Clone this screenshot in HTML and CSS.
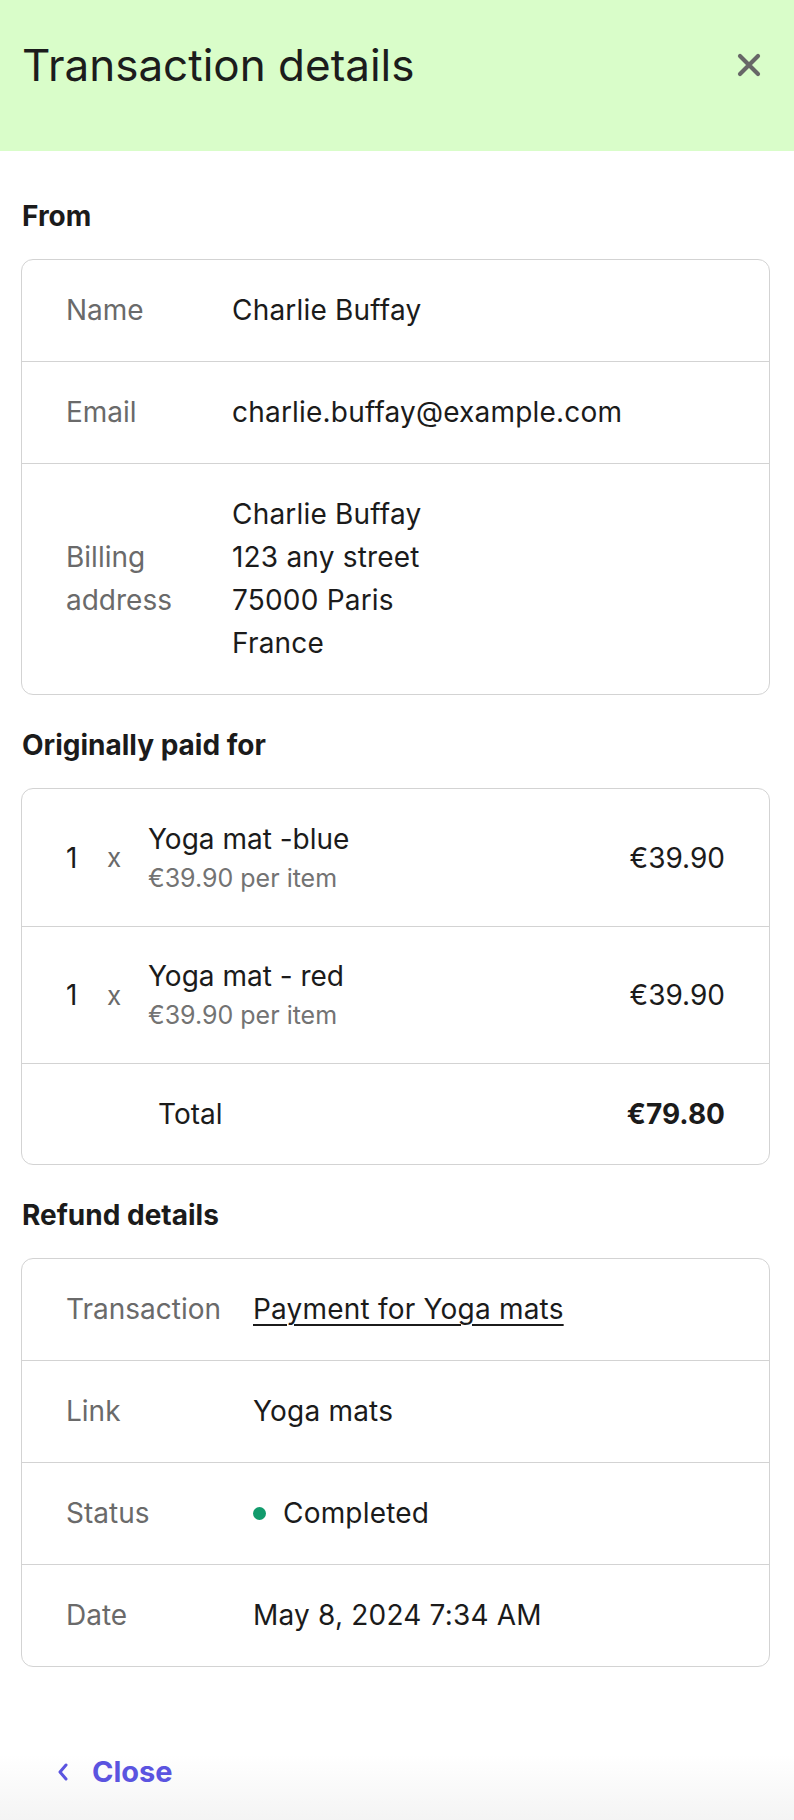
FILE: index.html
```html
<!DOCTYPE html>
<html lang="en">
<head>
<meta charset="utf-8">
<title>Transaction details</title>
<link rel="stylesheet" href="styles.css">
</head>
<body>
<div class="panel">
  <header class="topbar">
    <h1 class="title">Transaction details</h1>
    <button class="x-btn" aria-label="Close">
      <svg width="26" height="26" viewBox="0 0 26 26"><path d="M4 4 L22 22 M22 4 L4 22" stroke="#676767" stroke-width="4.2" stroke-linecap="round" fill="none"/></svg>
    </button>
  </header>

  <main class="content">
    <h2 class="section-title first">From</h2>
    <div class="card">
      <div class="row kv">
        <div class="label">Name</div>
        <div class="value">Charlie Buffay</div>
      </div>
      <div class="row kv">
        <div class="label">Email</div>
        <div class="value">charlie.buffay@example.com</div>
      </div>
      <div class="row kv tall">
        <div class="label">Billing<br>address</div>
        <div class="value">Charlie Buffay<br>123 any street<br>75000 Paris<br>France</div>
      </div>
    </div>

    <h2 class="section-title">Originally paid for</h2>
    <div class="card">
      <div class="row item">
        <div class="qty">1</div>
        <div class="times">x</div>
        <div class="desc">
          <div class="name">Yoga mat -blue</div>
          <div class="unit">€39.90 per item</div>
        </div>
        <div class="price">€39.90</div>
      </div>
      <div class="row item">
        <div class="qty">1</div>
        <div class="times">x</div>
        <div class="desc">
          <div class="name">Yoga mat - red</div>
          <div class="unit">€39.90 per item</div>
        </div>
        <div class="price">€39.90</div>
      </div>
      <div class="row total">
        <div class="total-label">Total</div>
        <div class="total-value">€79.80</div>
      </div>
    </div>

    <h2 class="section-title">Refund details</h2>
    <div class="card">
      <div class="row kv wide">
        <div class="label">Transaction</div>
        <div class="value"><a class="link" href="#">Payment for Yoga mats</a></div>
      </div>
      <div class="row kv wide">
        <div class="label">Link</div>
        <div class="value">Yoga mats</div>
      </div>
      <div class="row kv wide">
        <div class="label">Status</div>
        <div class="value status"><span class="dot"></span>Completed</div>
      </div>
      <div class="row kv wide">
        <div class="label">Date</div>
        <div class="value">May 8, 2024 7:34 AM</div>
      </div>
    </div>
  </main>

  <footer class="footer">
    <a class="close-link" href="#">
      <svg width="14" height="20" viewBox="0 0 14 20"><path d="M10 3 L4 10 L10 17" stroke="#5b54e0" stroke-width="3" stroke-linecap="round" stroke-linejoin="round" fill="none"/></svg>
      <span>Close</span>
    </a>
  </footer>
</div>
</body>
</html>
```

FILE: styles.css
```css
* { box-sizing: border-box; }
html, body { margin: 0; padding: 0; }
body {
  font-family: Inter, "Noto Sans", "Liberation Sans", sans-serif;
  color: #1b1b1b;
  background: #ffffff;
}
.panel {
  width: 794px;
  min-height: 1820px;
  display: flex;
  flex-direction: column;
  background: linear-gradient(to bottom, #ffffff 0, #ffffff 1755px, #f4f4f4 1820px);
}
.topbar {
  height: 151px;
  background: #d9fdc9;
  display: flex;
  align-items: flex-start;
  justify-content: space-between;
  padding: 40px 32px 0 22px;
}
.title {
  margin: 0;
  font-size: 44px;
  font-weight: 400;
  line-height: 50px;
  letter-spacing: 0;
  color: #1c1c1c;
}
.x-btn {
  border: 0;
  background: transparent;
  padding: 0;
  margin-top: 12px;
  width: 26px;
  height: 26px;
  cursor: pointer;
}
.content {
  padding: 0 24px 0 21px;
}
.section-title {
  margin: 35px 0 28px 1px;
  font-size: 28px;
  line-height: 30px;
  font-weight: 700;
  color: #1b1b1b;
}
.section-title.first { margin-top: 50px; }
.card {
  border: 1px solid #d3d3d3;
  border-radius: 12px;
}
.row + .row { border-top: 1px solid #d3d3d3; }
.kv {
  display: grid;
  grid-template-columns: 166px 1fr;
  align-items: center;
  padding: 29px 20px 29px 44px;
  font-size: 28px;
  line-height: 43px;
}
.kv.wide { grid-template-columns: 187px 1fr; }
.label { color: #6a6a6a; }
.value { color: #1b1b1b; letter-spacing: 0.2px; }
.link { color: #1b1b1b; text-decoration: underline; text-underline-offset: 5px; text-decoration-thickness: 1.5px; }
.status { display: flex; align-items: center; }
.dot {
  width: 13px;
  height: 13px;
  border-radius: 50%;
  background: #119b6c;
  margin-right: 17px;
}
.item {
  display: flex;
  align-items: center;
  padding: 28px 44px 28px 44px;
  height: 137px;
}
.qty { font-size: 28px; width: 41px; color: #1b1b1b; }
.times { font-size: 26px; width: 41px; color: #6a6a6a; }
.desc { flex: 1; }
.name { font-size: 28px; line-height: 40px; color: #1b1b1b; }
.unit { font-size: 25px; line-height: 38px; color: #737373; }
.price { font-size: 28px; color: #1b1b1b; }
.total {
  display: flex;
  align-items: center;
  justify-content: space-between;
  height: 101px;
  padding: 0 44px 0 136px;
  font-size: 28px;
}
.total-value { font-weight: 700; }
.footer {
  margin-top: auto;
  padding: 0 0 28px 56px;
}
.close-link {
  display: inline-flex;
  align-items: center;
  gap: 22px;
  text-decoration: none;
  color: #5b54e0;
  font-size: 29px;
  font-weight: 700;
  line-height: 40px;
}
```
